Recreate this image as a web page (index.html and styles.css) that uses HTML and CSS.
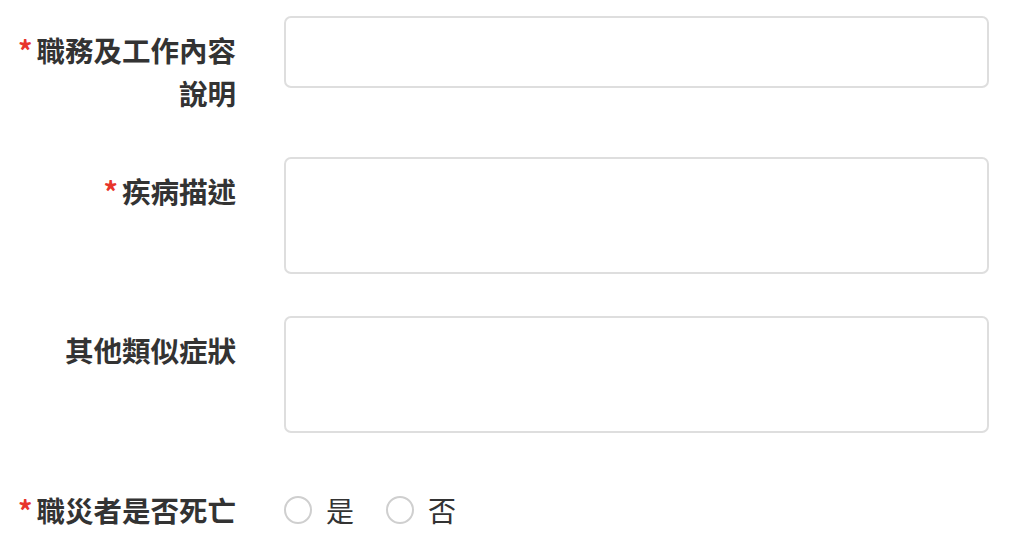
FILE: index.html
```html
<!DOCTYPE html>
<html lang="zh-Hant">
<head>
<meta charset="utf-8">
<link rel="stylesheet" href="styles.css">
</head>
<body>
<form class="form">
  <div class="row">
    <label class="label"><span class="req">*</span>職務及工作內容說明</label>
    <div class="field"><textarea class="box box-sm"></textarea></div>
  </div>
  <div class="row">
    <label class="label"><span class="req">*</span>疾病描述</label>
    <div class="field"><textarea class="box box-lg"></textarea></div>
  </div>
  <div class="row">
    <label class="label">其他類似症狀</label>
    <div class="field"><textarea class="box box-lg"></textarea></div>
  </div>
  <div class="row">
    <label class="label"><span class="req">*</span>職災者是否死亡</label>
    <div class="field radios">
      <label class="radio"><span class="circle"></span><span class="rtext">是</span></label>
      <label class="radio"><span class="circle"></span><span class="rtext">否</span></label>
    </div>
  </div>
</form>
</body>
</html>
```

FILE: styles.css
```css
html, body {
  margin: 0;
  padding: 0;
  background: #fff;
}
body {
  font-family: "Noto Sans CJK TC", "Noto Sans", sans-serif;
  color: #333;
}
.form {
  padding-top: 16px;
  display: flex;
  flex-direction: column;
  gap: 42.5px;
}
.row {
  display: flex;
  align-items: flex-start;
  gap: 48px;
}
.label {
  width: 236px;
  flex: none;
  box-sizing: border-box;
  padding: 12px 0 0 14px;
  text-align: right;
  font-size: 28.5px;
  font-weight: 700;
  line-height: 43px;
  color: #333;
}
.req {
  color: #e8352b;
  font-weight: 700;
  margin-right: 4px;
}
.field {
  width: 705px;
  flex: none;
}
.box {
  display: block;
  width: 100%;
  box-sizing: border-box;
  border: 2px solid #dedede;
  border-radius: 7px;
  background: #fff;
  resize: none;
  margin: 0;
  padding: 8px 12px;
  font: inherit;
}
.box-sm { height: 72px; }
.box-lg { height: 117px; }
.radios {
  display: flex;
  align-items: center;
  padding-top: 18px;
  gap: 32px;
}
.radio {
  display: flex;
  align-items: center;
  gap: 14px;
}
.circle {
  width: 28px;
  height: 28px;
  box-sizing: border-box;
  border: 2px solid #cfcfcf;
  border-radius: 50%;
  background: #fff;
}
.rtext {
  font-size: 28px;
  line-height: 32px;
  color: #333;
}
```
